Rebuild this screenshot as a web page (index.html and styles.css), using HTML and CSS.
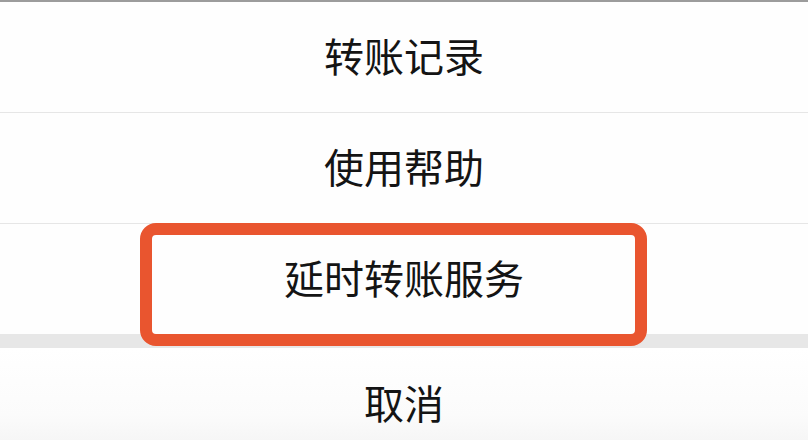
FILE: index.html
```html
<!DOCTYPE html>
<html lang="zh-CN">
<head>
<meta charset="utf-8">
<title>转账菜单</title>
<link rel="stylesheet" href="styles.css">
</head>
<body>
<div class="sheet">
  <div class="topline"></div>
  <div class="item">转账记录</div>
  <div class="item">使用帮助</div>
  <div class="item item-last">
    <span>延时转账服务</span>
    <div class="highlight"></div>
  </div>
  <div class="gap"></div>
  <div class="item cancel">取消</div>
</div>
</body>
</html>
```
FILE: styles.css
```css
html, body {
  margin: 0;
  padding: 0;
  background: #ffffff;
}
.sheet {
  width: 808px;
  height: 440px;
  overflow: hidden;
  display: flex;
  flex-direction: column;
  font-family: "Noto Sans CJK SC", "Noto Sans", sans-serif;
  color: #141414;
}
.topline {
  height: 2px;
  flex: 0 0 2px;
  background: #9c9c9c;
}
.item {
  position: relative;
  flex: 0 0 auto;
  height: 110px;
  box-sizing: content-box;
  display: flex;
  align-items: center;
  justify-content: center;
  font-size: 40px;
  line-height: 1;
  border-bottom: 1px solid #e6e6e6;
  background: #fefefe;
}
.item > span,
.item {
  padding-bottom: 0;
}
.item {
  height: 105px;
  padding-bottom: 5px;
}
.item-last {
  border-bottom: none;
}
.gap {
  flex: 0 0 14px;
  height: 14px;
  background: #e7e7e7;
}
.cancel {
  border-bottom: none;
  height: 107px;
  background: linear-gradient(#ffffff 0%, #fbfbfb 60%, #f2f2f2 100%);
}
.highlight {
  position: absolute;
  left: 140px;
  right: 161px;
  top: -1px;
  bottom: -12px;
  border: 12px solid #e9552f;
  border-radius: 16px;
  box-sizing: border-box;
  z-index: 2;
}
```
